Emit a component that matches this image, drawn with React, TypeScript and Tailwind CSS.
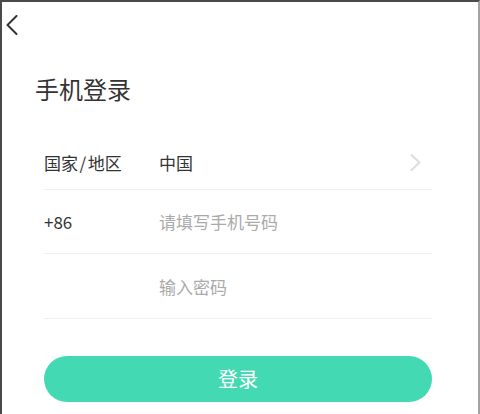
const font = { fontFamily: '"Noto Sans CJK SC", "Noto Sans", sans-serif' };

function BackIcon() {
  return (
    <svg width="12" height="20" viewBox="0 0 12 20" fill="none">
      <path d="M10.5 1 L1.5 10 L10.5 19" stroke="#333333" strokeWidth="2" strokeLinecap="round" strokeLinejoin="round" />
    </svg>
  );
}

function ChevronRight() {
  return (
    <svg width="11" height="17" viewBox="0 0 11 17" fill="none">
      <path d="M1.5 1 L9.5 8.5 L1.5 16" stroke="#dddddd" strokeWidth="2" strokeLinecap="round" strokeLinejoin="round" />
    </svg>
  );
}

function Row({
  label,
  children,
  right,
  className = "",
}: {
  label?: React.ReactNode;
  children: React.ReactNode;
  right?: React.ReactNode;
  className?: string;
}) {
  return (
    <div className={`flex h-[64px] items-center border-b border-[#efefef] ${className}`}>
      <div className="w-[115px] text-[17px] text-[#333333]">{label}</div>
      <div className="flex-1 text-[17px]">{children}</div>
      {right && <div className="mr-[11px] flex items-center">{right}</div>}
    </div>
  );
}

export default function App() {
  return (
    <div
      className="flex h-[414px] w-[480px] flex-col overflow-hidden border-l-2 border-t-2 border-[#4a4a4a] border-r-2 border-r-[#a3a3a3] bg-white"
      style={font}
    >
      <div className="flex h-[46px] items-center pl-[4px]">
        <button className="flex items-center">
          <BackIcon />
        </button>
      </div>

      <div className="flex h-[78px] items-center pl-[33px] pt-[4px] text-[24px] text-[#333333]">手机登录</div>

      <div className="ml-[42px] mr-[46px] flex flex-col">
        <Row
          label={
            <>
              国家<span className="mx-[1.5px]">/</span>地区
            </>
          }
          right={<ChevronRight />}
          className="pt-[10px]"
        >
          <span className="text-[#333333]">中国</span>
        </Row>
        <Row label="+86" className="pt-[1px]">
          <input
            className="w-full bg-transparent text-[#333333] outline-none placeholder:text-[#aaaaaa]"
            placeholder="请填写手机号码"
          />
        </Row>
        <Row className="h-[65px] pt-[1px]">
          <input
            type="password"
            className="w-full bg-transparent text-[#333333] outline-none placeholder:text-[#aaaaaa]"
            placeholder="输入密码"
          />
        </Row>

        <button className="mt-[37px] h-[46px] w-full rounded-full bg-[#43d9b3] text-[20px] text-white">登录</button>
      </div>
    </div>
  );
}
